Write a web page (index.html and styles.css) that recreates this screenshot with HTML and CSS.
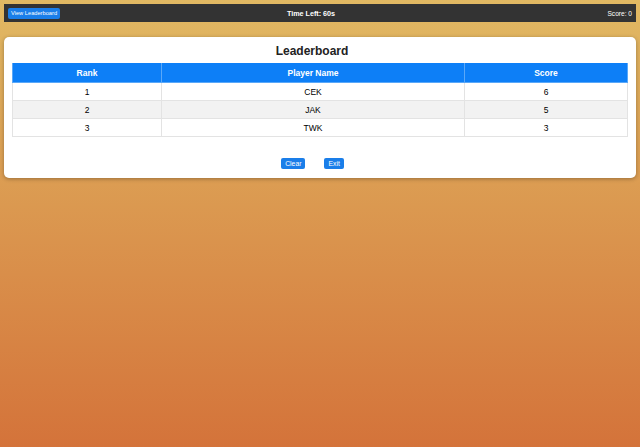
FILE: index.html
```html
<!DOCTYPE html>
<html>
<head>
<meta charset="utf-8">
<link rel="stylesheet" href="styles.css">
</head>
<body>
<div class="topbar">
  <button class="btn btn-small">View Leaderboard</button>
  <div class="timer">Time Left: 60s</div>
  <div class="score">Score: 0</div>
</div>
<div class="card">
  <h2 class="title">Leaderboard</h2>
  <table class="board">
    <colgroup>
      <col class="c1"><col class="c2"><col class="c3">
    </colgroup>
    <thead>
      <tr><th>Rank</th><th>Player Name</th><th>Score</th></tr>
    </thead>
    <tbody>
      <tr><td>1</td><td>CEK</td><td>6</td></tr>
      <tr class="alt"><td>2</td><td>JAK</td><td>5</td></tr>
      <tr><td>3</td><td>TWK</td><td>3</td></tr>
    </tbody>
  </table>
  <div class="actions">
    <button class="btn">Clear</button>
    <button class="btn">Exit</button>
  </div>
</div>
</body>
</html>
```
FILE: styles.css
```css
html, body {
  margin: 0;
  height: 100%;
}
body {
  padding: 4px;
  box-sizing: border-box;
  font-family: "Liberation Sans", Arial, sans-serif;
  background: linear-gradient(to bottom, #e1b963 0%, #d4733a 100%);
  min-height: 447px;
}
.topbar {
  display: grid;
  grid-template-columns: 1fr auto 1fr;
  align-items: center;
  height: 18px;
  background: #333333;
  color: #fff;
  padding: 0 4px;
  font-size: 7.5px;
}
.timer {
  text-align: center;
  font-weight: bold;
  font-size: 7.2px;
  padding-right: 18px;
}
.score {
  text-align: right;
  font-size: 6.6px;
}
.btn {
  font-family: inherit;
  background: #1a7ee9;
  color: #fff;
  border: none;
  border-radius: 2px;
  font-size: 6.8px;
  padding: 0 4px;
  height: 11px;
  line-height: 11px;
  cursor: pointer;
}
.topbar .btn {
  justify-self: start;
  padding: 0 3px;
  font-size: 5.7px;
}
.card {
  margin-top: 15px;
  background: #fff;
  border-radius: 5px;
  box-shadow: 0 1px 4px rgba(0,0,0,0.3);
  padding: 8px 8px 9px;
}
.title {
  margin: 0 0 6px;
  padding-right: 16px;
  text-align: center;
  font-size: 12px;
  font-weight: bold;
  color: #222;
  line-height: 12px;
}
.board {
  width: 100%;
  border-collapse: collapse;
  font-size: 8.5px;
  color: #000;
}
.c1 { width: 149px; }
.c2 { width: 303px; }
.c3 { width: auto; }
.board th {
  background: #0d7ff7;
  color: #fff;
  font-weight: bold;
  height: 19px;
  padding: 0;
  border: 1px solid #5aa8f8;
  border-top: none;
}
.board td {
  height: 17px;
  padding: 0;
  text-align: center;
  border: 1px solid #e3e3e3;
}
.board .alt td {
  background: #f2f2f2;
}
.actions {
  display: flex;
  justify-content: center;
  gap: 19px;
  margin-top: 21px;
  padding-right: 15px;
}
```
